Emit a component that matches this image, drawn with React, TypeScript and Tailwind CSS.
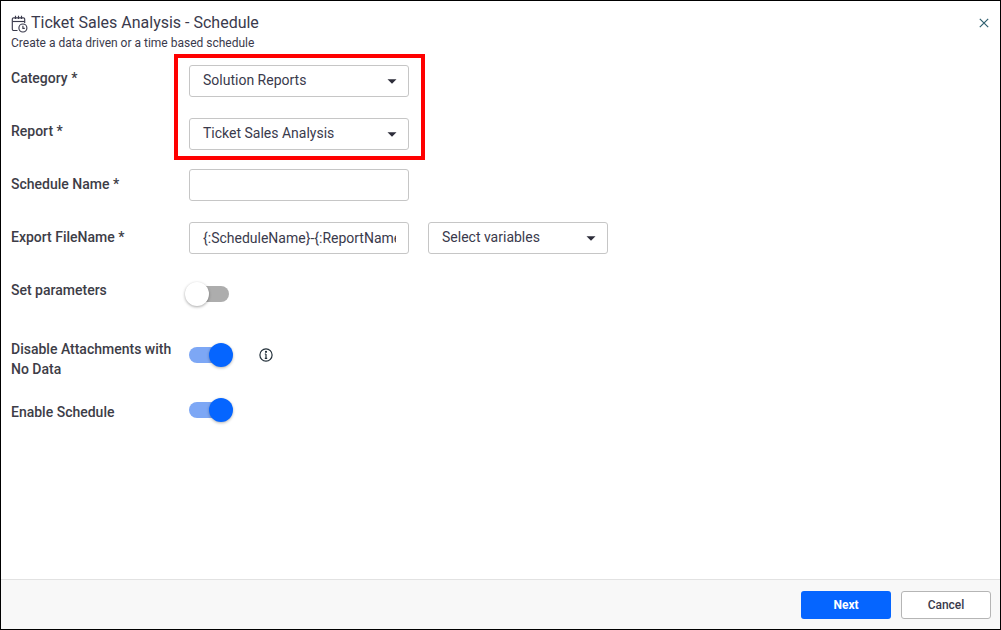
import React from "react";

const Caret = () => (
  <svg width="10" height="5" viewBox="0 0 10 5" className="block">
    <path d="M0.5 0.2H9.5L5 4.8Z" fill="#2d2d3a" />
  </svg>
);

const Select = ({ label, className }: { label: string; className: string }) => (
  <div className={`h-8 flex items-center justify-between bg-white border border-[#c6c6c6] rounded-[3px] pl-[13px] pr-[11px] text-[14px] text-[#3a3a4c] ${className}`}>
    <span className="pb-[2px]">{label}</span>
    <Caret />
  </div>
);

const Toggle = ({ on }: { on: boolean }) =>
  on ? (
    <div className="relative w-10 h-4 rounded-lg bg-[#7da7f5]">
      <div className="absolute left-5 -top-1 w-6 h-6 rounded-full bg-[#0565ff] shadow-[0_1px_3px_rgba(0,0,0,0.3)]" />
    </div>
  ) : (
    <div className="relative w-10 h-4 rounded-lg bg-[#adadad]">
      <div className="absolute -left-1 -top-1 w-6 h-6 rounded-full bg-white shadow-[0_1px_3px_rgba(0,0,0,0.35)]" />
    </div>
  );

const Label = ({ children, className = "" }: { children: React.ReactNode; className?: string }) => (
  <div className={`w-[178px] shrink-0 text-[14px] leading-5 font-medium text-[#3d3d47] ${className}`}>{children}</div>
);

export default function App() {
  return (
    <div className="relative w-[1001px] h-[630px] flex flex-col bg-white border border-black font-['Roboto',sans-serif] overflow-hidden">
      <div className="flex-1 flex flex-col pl-[10px]">
        <div className="flex items-center h-[20px] mt-[12px] relative">
          <svg width="17" height="18" viewBox="0 0 17 18" fill="none" stroke="#3a3a4c" strokeWidth="1.15" className="mr-[3px] mt-[1px]">
            <path d="M6.5 15.5H2.7A1.4 1.4 0 0 1 1.3 14.1V4.2A1.4 1.4 0 0 1 2.7 2.8H12.3A1.4 1.4 0 0 1 13.7 4.2V8" />
            <path d="M1.5 6.5H13.5" />
            <path d="M4.5 0.8V4M7.5 0.8V4M10.5 0.8V4" />
            <circle cx="11.9" cy="13" r="4" />
            <path d="M11.9 10.8V13.3H13.8" />
          </svg>
          <span className="text-[16px] text-[#3a3a4c] leading-5">Ticket Sales Analysis - Schedule</span>
          <svg width="10" height="10" viewBox="0 0 10 10" className="absolute left-[968px] top-[5px]" stroke="#2f5f6f" strokeWidth="1.2" fill="none">
            <path d="M0.8 0.8L9.2 9.2M9.2 0.8L0.8 9.2" />
          </svg>
        </div>
        <div className="text-[12px] leading-4 text-[#3a3a4c] mt-[2px]">Create a data driven or a time based schedule</div>

        <div className="flex items-start mt-[14px] h-8">
          <Label className="mt-[3px]">Category *</Label>
          <Select label="Solution Reports" className="w-[220px]" />
        </div>
        <div className="flex items-start mt-[21px] h-8">
          <Label className="mt-[3px]">Report *</Label>
          <Select label="Ticket Sales Analysis" className="w-[220px]" />
        </div>
        <div className="flex items-start mt-[19px] h-8">
          <Label className="mt-[5px]">Schedule Name *</Label>
          <div className="w-[220px] h-8 bg-white border border-[#c6c6c6] rounded-[3px]" />
        </div>
        <div className="flex items-start mt-[21px] h-8">
          <Label className="mt-[5px]">Export FileName *</Label>
          <div className="w-[220px] h-8 bg-white border border-[#c6c6c6] rounded-[3px] pl-[13px] pr-[12px] flex items-center">
            <span className="text-[14px] text-[#3a3a4c] whitespace-nowrap overflow-hidden">{"{:ScheduleName}-{:ReportName}"}</span>
          </div>
          <Select label="Select variables" className="w-[180px] ml-[19px]" />
        </div>
        <div className="flex items-start mt-[26px]">
          <Label>Set parameters</Label>
          <div className="mt-[6px]"><Toggle on={false} /></div>
        </div>
        <div className="flex items-start mt-[37px]">
          <Label>Disable Attachments with No Data</Label>
          <div className="mt-2 w-[40px]"><Toggle on /></div>
          <svg width="14" height="14" viewBox="0 0 14 14" fill="none" stroke="#23303a" strokeWidth="1.2" className="ml-[30px] mt-[9px]">
            <circle cx="7" cy="7" r="6.1" />
            <path d="M7 6V10.3M5.8 10.3H8.2M5.8 6H7" />
            <circle cx="7" cy="3.8" r="0.5" fill="#23303a" />
          </svg>
        </div>
        <div className="flex items-start mt-[23px]">
          <Label>Enable Schedule</Label>
          <div><Toggle on /></div>
        </div>
      </div>

      <div className="h-[50px] flex items-center justify-end gap-[10px] pr-[9px] bg-[#f8f8f8] border-t border-[#e2e2e2]">
        <button className="w-[90px] h-7 rounded-[3px] bg-[#0565ff] text-white text-[12px] font-bold">Next</button>
        <button className="w-[90px] h-7 rounded-[3px] bg-white border border-[#b5b5b5] text-[#3a3a4c] text-[12px] font-medium">Cancel</button>
      </div>

      <div className="absolute left-[173px] top-[53px] w-[251px] h-[106px] border-4 border-[#ff0000]" />
    </div>
  );
}
